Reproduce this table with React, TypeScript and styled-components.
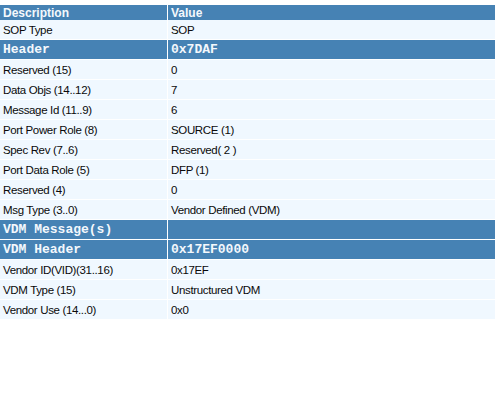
import React from "react";
import styled, { createGlobalStyle } from "styled-components";

const Global = createGlobalStyle`
  html, body { margin: 0; padding: 0; background: #ffffff; }
  body { font-family: "Liberation Sans", Arial, sans-serif; }
`;

type Kind = "head" | "field" | "section";

const Panel = styled.div`
  padding-top: 5px;
  width: 495px;
`;

const Row = styled.div<{ $kind: Kind }>`
  display: grid;
  grid-template-columns: 167px 1fr;
  column-gap: 1px;
  height: ${(p) => (p.$kind === "head" ? "15px" : "19px")};
  border-bottom: ${(p) => (p.$kind === "head" ? "0" : "1px solid #ffffff")};
`;

const Cell = styled.div<{ $kind: Kind }>`
  display: flex;
  align-items: center;
  padding-left: 3px;
  white-space: nowrap;
  overflow: hidden;
  background: ${(p) => (p.$kind === "field" ? "#f0f8ff" : "#4682b4")};
  color: ${(p) => (p.$kind === "field" ? "#0a0a0a" : "#f4f8fc")};
  font-family: ${(p) =>
    p.$kind === "section"
      ? `"Liberation Mono", "Courier New", monospace`
      : `"Liberation Sans", Arial, sans-serif`};
  font-size: ${(p) =>
    p.$kind === "section" ? "13px" : p.$kind === "head" ? "12px" : "11.5px"};
  font-weight: ${(p) => (p.$kind === "field" ? 400 : 700)};
  letter-spacing: ${(p) => (p.$kind === "field" ? "-0.35px" : "0")};
`;

const rows: [Kind, string, string][] = [
  ["head", "Description", "Value"],
  ["field", "SOP Type", "SOP"],
  ["section", "Header", "0x7DAF"],
  ["field", "Reserved (15)", "0"],
  ["field", "Data Objs (14..12)", "7"],
  ["field", "Message Id (11..9)", "6"],
  ["field", "Port Power Role (8)", "SOURCE (1)"],
  ["field", "Spec Rev (7..6)", "Reserved( 2 )"],
  ["field", "Port Data Role (5)", "DFP (1)"],
  ["field", "Reserved (4)", "0"],
  ["field", "Msg Type (3..0)", "Vendor Defined (VDM)"],
  ["section", "VDM Message(s)", ""],
  ["section", "VDM Header", "0x17EF0000"],
  ["field", "Vendor ID(VID)(31..16)", "0x17EF"],
  ["field", "VDM Type (15)", "Unstructured VDM"],
  ["field", "Vendor Use (14...0)", "0x0"],
];

export default function App() {
  return (
    <>
      <Global />
      <Panel>
        {rows.map(([kind, desc, value], i) => (
          <Row key={i} $kind={kind}>
            <Cell $kind={kind}>{desc}</Cell>
            <Cell $kind={kind}>{value}</Cell>
          </Row>
        ))}
      </Panel>
    </>
  );
}
